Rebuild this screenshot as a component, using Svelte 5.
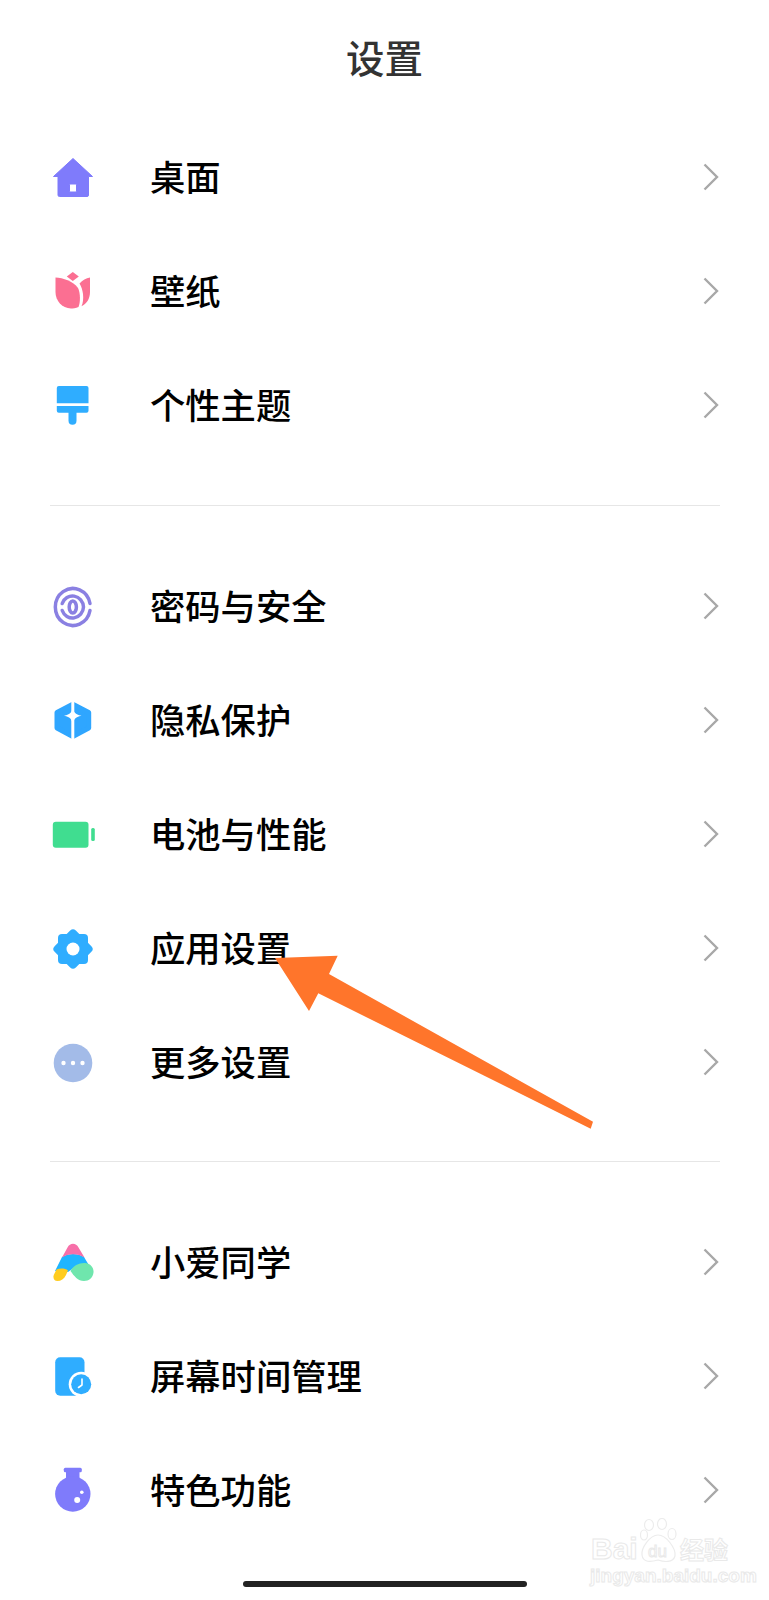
<script>
  const groups = [
    [
      { icon: "home", label: "桌面" },
      { icon: "tulip", label: "壁纸" },
      { icon: "brush", label: "个性主题" },
    ],
    [
      { icon: "finger", label: "密码与安全" },
      { icon: "shield", label: "隐私保护" },
      { icon: "battery", label: "电池与性能" },
      { icon: "gear", label: "应用设置" },
      { icon: "more", label: "更多设置" },
    ],
    [
      { icon: "xiaoai", label: "小爱同学" },
      { icon: "clock", label: "屏幕时间管理" },
      { icon: "flask", label: "特色功能" },
    ],
  ];
</script>

<main class="page">
  <header class="title">设置</header>

  {#each groups as rows, g}
    {#if g > 0}
      <hr class="divider" />
    {/if}
    <ul class="group">
      {#each rows as row}
        <li class="row">
          <svg class="icon" viewBox="0 0 40 40">
            {#if row.icon === "home"}
              <path fill="#7f7bfb" fill-rule="evenodd" stroke="#7f7bfb" stroke-width="1" stroke-linejoin="round" d="M20 .5 39.500 18.500H35.500V37a1.500 1.500 0 0 1-1.500 1.500H6.500A1.500 1.500 0 0 1 5 37V18.500H.5ZM17.500 26a1 1 0 0 0-1 1V33a1 1 0 0 0 1 1h5a1 1 0 0 0 1-1v-6a1 1 0 0 0-1-1Z" />
            {:else if row.icon === "tulip"}
              <g fill="#fb6f92">
                <path d="M19.800 0 25.800 4.500 19.800 9 13.800 4.500Z" />
                <path d="M2.500 5.500C10 6 20 9 25 16 27.500 21 27.500 30 25.500 35 23 36.200 19.500 36.500 18 36.500 9 36 2.500 29 2.500 20Z" />
                <path d="M37 5.500C33 6 29.500 8 26.500 11.500 28.500 15 29.500 18 30 22 30.500 27 30 31 28.500 34.200 33.500 32 37 27 37 20Z" />
              </g>
            {:else if row.icon === "brush"}
              <g fill="#2fadff">
                <path d="M3.800 2a2 2 0 0 1 2-2H33.500a2 2 0 0 1 2 2V17.300H3.800Z" />
                <path d="M3.800 20H35.500V24.700a2 2 0 0 1-2 2H5.800a2 2 0 0 1-2-2Z" />
                <path d="M15.500 26H23.500V34.700a4 4 0 0 1-8 0Z" />
              </g>
            {:else if row.icon === "finger"}
              <g fill="none" stroke="#8a80e2" stroke-linecap="round" stroke-width="3.500">
                <path d="M37 16.500A17.500 18.500 0 1 0 37 23.500" />
                <path d="M9.200 16.500A11 11.500 0 0 1 30.500 20 11 11.500 0 0 1 9.200 23.500" />
                <ellipse cx="19.800" cy="20" rx="3.600" ry="6" />
              </g>
            {:else if row.icon === "shield"}
              <path fill="#2fa6ff" stroke="#2fa6ff" stroke-width="5" stroke-linejoin="round" d="M19.800 3.200 35.700 11.500V27L19.800 35.500 4 27V11.500Z" />
              <rect x="18.300" y="-1" width="3" height="40" fill="#fff" />
              <path fill="#fff" d="M19.800 6C20.500 11 22 13.600 28.500 14.700 22 15.800 20.500 18.500 19.800 24 19 18.500 17.600 15.800 11 14.700 17.600 13.600 19 11 19.800 6Z" />
            {:else if row.icon === "battery"}
              <rect x="-0.200" y="6.700" width="35.700" height="26" rx="3" fill="#40dd90" />
              <rect x="38.200" y="13" width="3.600" height="13" rx="1.500" fill="#40dd90" />
            {:else if row.icon === "gear"}
              <g fill="#2fadff">
                <rect x="5" y="5" width="30" height="30" rx="4" />
                <rect x="5" y="5" width="30" height="30" rx="4" transform="rotate(45 20 20)" />
              </g>
              <circle cx="20" cy="20" r="6.500" fill="#fff" />
            {:else if row.icon === "more"}
              <circle cx="20" cy="20" r="19.300" fill="#a3bbe8" />
              <g fill="#fff">
                <circle cx="10.500" cy="20" r="2.200" />
                <circle cx="20" cy="20" r="2.200" />
                <circle cx="29.500" cy="20" r="2.200" />
              </g>
            {:else if row.icon === "xiaoai"}
              <path fill="#1fb5ff" d="M9 14C15 10 25 10 31 14L37 24H22L15 29 2 28Z" />
              <path fill="#f76fa9" d="M9 14.500 14.500 4.500C17-.5 23-.5 25.500 4.500L31.500 14.500C25 10 15 10 9 14.500Z" />
              <path fill="#ffcc1f" d="M3.500 26.500C7 25 12 25 15 27.500L13 32C11 36 8 38 4.500 38 1 38-.5 34.500 1 31.500Z" />
              <path fill="#6fe6ad" d="M17.500 28C20 22.500 27 19.500 32 20 38 20.500 41 25 40.500 29.500 40 34.500 36 38 31 38 25 38 21 33 17.500 28Z" />
            {:else if row.icon === "clock"}
              <rect x="2.200" y="0.300" width="29.300" height="38.400" rx="5" fill="#2fadff" />
              <circle cx="28.200" cy="27.300" r="12.500" fill="#fff" />
              <circle cx="28.200" cy="27.300" r="10" fill="#2fadff" />
              <path fill="none" stroke="#fff" stroke-width="1.600" stroke-linecap="round" stroke-linejoin="round" d="M29 22V28L25.500 30.500" />
            {:else if row.icon === "flask"}
              <rect x="10.800" y="-3.300" width="18" height="4.500" rx="1.500" fill="#7f7bfb" />
              <rect x="13" y="0" width="13.500" height="10" fill="#7f7bfb" />
              <circle cx="19.800" cy="23" r="17.700" fill="#7f7bfb" />
              <circle cx="24.200" cy="29" r="3" fill="#fff" />
              <circle cx="28.800" cy="21.300" r="1.800" fill="#fff" />
            {/if}
          </svg>
          <span class="label">{row.label}</span>
          <svg class="chevron" viewBox="0 0 16 28">
            <path d="M1.500 1.500 14 14 1.500 26.500" />
          </svg>
        </li>
      {/each}
    </ul>
  {/each}

  <div class="home-bar"></div>

  <!-- annotation drawn over the screenshot -->
  <svg class="arrow" viewBox="0 0 769 1600">
    <path fill="#ff752b" d="M275 958 337.700 955.700 329 974 593 1121.700 590.700 1128.700 318.300 993.300 309 1011Z" />
  </svg>

  <div class="watermark">
    <svg class="paw" viewBox="0 0 38 46">
      <g fill="#fff" stroke="#ececec" stroke-width="1.200">
        <ellipse cx="9" cy="7" rx="4.500" ry="5.500" />
        <ellipse cx="22" cy="6" rx="4.500" ry="5.500" />
        <ellipse cx="32" cy="16" rx="4" ry="5.500" />
        <ellipse cx="4" cy="17" rx="3.500" ry="5" />
        <path d="M18 17C26 17 36 30 35 38 33 45 24 44 18 42 11 44 3 45 2 37 1 30 10 17 18 17Z" />
      </g>
    </svg>
    <span class="wm-bai">Bai</span>
    <span class="wm-du">du</span>
    <span class="wm-cn">经验</span>
    <span class="wm-url">jingyan.baidu.com</span>
  </div>
</main>

<style>
  :global(body) {
    background: #fff;
  }

  .page {
    position: relative;
    display: flex;
    flex-direction: column;
    height: 1600px;
    overflow: hidden;
    background: #fff;
    font-family: "Noto Sans CJK SC", "Noto Sans", sans-serif;
  }

  .title {
    height: 120px;
    padding-top: 28px;
    box-sizing: border-box;
    text-align: center;
    font-size: 38.500px;
    line-height: 56px;
    font-weight: 500;
    color: #333;
  }

  .group {
    list-style: none;
    margin: 0;
    padding: 0;
  }

  .row {
    display: flex;
    align-items: center;
    height: 114px;
    padding: 0 50px 0 53px;
    color: #000;
  }

  .icon {
    width: 40px;
    height: 40px;
    margin-top: 1px;
    flex: none;
    overflow: visible;
  }

  .label {
    margin-left: 57px;
    padding-bottom: 2px;
    font-size: 35.300px;
    line-height: 50px;
    font-weight: 500;
  }

  .chevron {
    width: 16px;
    height: 28px;
    margin-left: auto;
    fill: none;
    stroke: #a8a8a8;
    stroke-width: 2.400;
  }

  .divider {
    height: 1px;
    margin: 43px 49px 43px 50px;
    border: 0;
    background: #e6e6e6;
  }

  .divider:nth-of-type(2) {
    margin-top: 42px;
  }

  .home-bar {
    width: 284px;
    height: 6px;
    margin: auto auto 13px;
    border-radius: 3px;
    background: #222;
  }

  .arrow {
    position: absolute;
    inset: 0;
    width: 769px;
    height: 1600px;
    pointer-events: none;
  }

  .watermark {
    position: absolute;
    left: 590px;
    top: 1518px;
    width: 140px;
    height: 68px;
    color: #fff;
    font-family: "Liberation Sans", sans-serif;
    font-weight: 700;
    -webkit-text-stroke: 1px #e9e9e9;
  }

  .paw {
    position: absolute;
    left: 50px;
    top: 0;
    width: 38px;
    height: 46px;
  }

  .wm-bai,
  .wm-du,
  .wm-cn,
  .wm-url {
    position: absolute;
    white-space: nowrap;
  }

  .wm-bai {
    left: 1px;
    top: 15px;
    font-size: 30px;
    line-height: 32px;
  }

  .wm-du {
    left: 58px;
    top: 24px;
    font-size: 17px;
    line-height: 20px;
    font-weight: 400;
  }

  .wm-cn {
    left: 90px;
    top: 18px;
    font-family: "Noto Sans CJK SC", sans-serif;
    font-size: 24px;
    line-height: 26px;
  }

  .wm-url {
    left: 0;
    top: 47px;
    font-size: 19px;
    line-height: 22px;
  }
</style>
